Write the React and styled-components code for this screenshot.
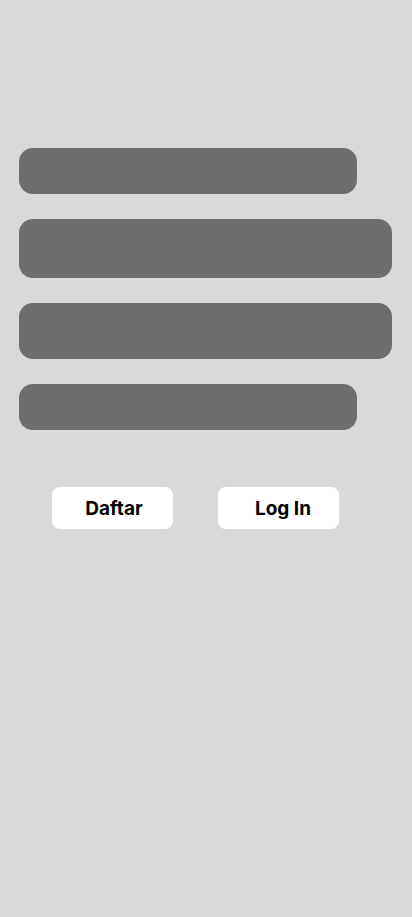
import React from "react";
import styled, { createGlobalStyle } from "styled-components";

const Global = createGlobalStyle`
  html, body { margin: 0; padding: 0; background: #d9d9d9; }
  body { font-family: Inter, "Noto Sans", sans-serif; }
`;

const Page = styled.div`
  width: 412px;
  min-height: 917px;
  background: #d9d9d9;
  box-sizing: border-box;
  padding: 148px 20px 0 19px;
  display: flex;
  flex-direction: column;
`;

const Fields = styled.div`
  display: flex;
  flex-direction: column;
  gap: 25px;
`;

const Field = styled.div`
  width: ${(p) => p.$w}px;
  height: ${(p) => p.$h}px;
  background: #6e6e6e;
  border-radius: 14px;
`;

const Actions = styled.div`
  display: flex;
  gap: 45px;
  margin-top: 57px;
  padding-left: 33px;
`;

const Button = styled.button`
  width: 121px;
  height: 42px;
  border: none;
  border-radius: 8px;
  background: #ffffff;
  color: #000;
  font-family: Inter, "Noto Sans", sans-serif;
  font-weight: 700;
  font-size: 19px;
  padding: 0 0 0 ${(p) => p.$pl || 0}px;
  display: flex;
  align-items: center;
  justify-content: center;
  cursor: pointer;
`;

export default function App() {
  return (
    <>
      <Global />
      <Page>
        <Fields>
          <Field $w={338} $h={46} />
          <Field $w={373} $h={59} />
          <Field $w={373} $h={56} />
          <Field $w={338} $h={46} />
        </Fields>
        <Actions>
          <Button $pl={3}>Daftar</Button>
          <Button $pl={9}>Log In</Button>
        </Actions>
      </Page>
    </>
  );
}
